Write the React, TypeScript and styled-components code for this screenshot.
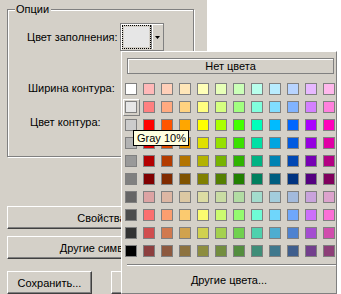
import React from "react";
import styled, { createGlobalStyle } from "styled-components";

const FACE = "#d4d0c8";

const GlobalStyle = createGlobalStyle`
  html, body {
    margin: 0;
    padding: 0;
    background: #fff;
  }
  body {
    font-family: "Liberation Sans", Arial, sans-serif;
    font-size: 11px;
    color: #000;
  }
`;

const Screen = styled.div`
  position: relative;
  width: 341px;
  height: 294px;
  overflow: hidden;
  display: flex;
`;

const Dialog = styled.div`
  width: 207px;
  flex-shrink: 0;
  background: ${FACE};
  padding: 3px 0 0 7px;
  box-sizing: border-box;
  display: flex;
  flex-direction: column;
  align-items: flex-start;
`;

const Outside = styled.div`
  flex: 1;
  background: #fff;
`;

const Group = styled.fieldset`
  margin: 0;
  min-width: 0;
  width: 187px;
  height: 155px;
  box-sizing: border-box;
  padding: 0;
  border: 1px solid #808080;
  box-shadow: inset 1px 1px 0 #fff, 1px 1px 0 #fff;
  display: flex;
  flex-direction: column;
`;

const Legend = styled.legend`
  margin-left: 7px;
  padding: 0 2px 0 1px;
  background: ${FACE};
  line-height: 13px;
`;

const FieldRow = styled.div<{ $top: number; $indent: number }>`
  display: flex;
  align-items: center;
  gap: 2px;
  height: 28px;
  margin-top: ${(p) => p.$top}px;
  padding-left: ${(p) => p.$indent}px;
`;

const Label = styled.span`
  white-space: nowrap;
`;

const ColorPicker = styled.div`
  display: flex;
  width: 44px;
  height: 28px;
  box-sizing: border-box;
  border: 1px solid #808080;
  box-shadow: inset 1px 1px 0 #fff;
  background: ${FACE};
`;

const FocusBox = styled.div`
  width: 29px;
  margin: 1px 0 1px 1px;
  box-sizing: border-box;
  border: 1px dotted #000;
  padding: 1px;
  display: flex;
`;

const Fill = styled.div<{ $color: string }>`
  flex: 1;
  background: ${(p) => p.$color};
`;

const Divider = styled.div`
  width: 1px;
  margin: 1px 0 1px 0;
  background: #808080;
  border-right: 1px solid #fff;
`;

const ArrowPart = styled.div`
  flex: 1;
  display: flex;
  align-items: center;
  justify-content: center;
`;

const PushButton = styled.button<{ $w: number }>`
  width: ${(p) => p.$w}px;
  height: 23px;
  flex-shrink: 0;
  padding: 0;
  box-sizing: border-box;
  background: ${FACE};
  font: inherit;
  color: #000;
  white-space: nowrap;
  overflow: hidden;
  border: 1px solid;
  border-color: #fff #404040 #404040 #fff;
  box-shadow: inset -1px -1px 0 #808080;
`;

const WideButton = styled(PushButton)<{ $top: number }>`
  margin-top: ${(p) => p.$top}px;
`;

const ButtonRow = styled.div`
  display: flex;
  gap: 19px;
  margin-top: 12px;
`;

/* ---- colour drop-down ---- */

const Popup = styled.div`
  position: absolute;
  left: 121px;
  top: 51px;
  width: 216px;
  height: 243px;
  box-sizing: border-box;
  background: ${FACE};
  border: 1px solid;
  border-color: #fff #808080 #808080 #fff;
  padding: 6px 0 0 3px;
  display: flex;
  flex-direction: column;
`;

const NoColorButton = styled.div`
  width: 207px;
  height: 16px;
  margin-left: 2px;
  box-sizing: border-box;
  border: 1px solid #808080;
  box-shadow: inset 1px 1px 0 #fff;
  display: flex;
  align-items: center;
  justify-content: center;
`;

const Palette = styled.div`
  display: grid;
  grid-template-columns: repeat(12, 12px);
  grid-auto-rows: 12px;
  gap: 6px;
  margin-top: 9px;
`;

const Swatch = styled.div<{ $color: string; $selected?: boolean }>`
  position: relative;
  box-sizing: border-box;
  border: 1px solid #808080;
  background: ${(p) => p.$color};

  ${(p) =>
    p.$selected &&
    `
    &::before {
      content: "";
      position: absolute;
      left: -3px;
      top: -3px;
      width: 17px;
      height: 17px;
      box-sizing: border-box;
      border: 1px solid;
      border-color: #fff #808080 #808080 #fff;
    }
  `}
`;

const Separator = styled.div`
  margin: 7px 0 0 2px;
  border-top: 1px solid #808080;
  border-bottom: 1px solid #fff;
`;

const MoreColors = styled.div`
  flex: 1;
  display: flex;
  align-items: center;
  justify-content: center;
  padding-right: 3px;
`;

const Tooltip = styled.div`
  position: absolute;
  left: 133px;
  top: 130px;
  width: 56px;
  height: 16px;
  box-sizing: border-box;
  padding-left: 3px;
  background: #ffffe1;
  border: 1px solid #000;
  display: flex;
  align-items: center;
  white-space: nowrap;
`;

const grays = [
  "#ffffff",
  "#e6e6e6",
  "#cccccc",
  "#b3b3b3",
  "#999999",
  "#808080",
  "#666666",
  "#4d4d4d",
  "#333333",
  "#000000",
];

const hues = [0, 20, 39, 60, 80, 104, 164, 196, 216, 280, 316];

const tones: [number, number][] = [
  [100, 86],
  [100, 75],
  [100, 50],
  [100, 44],
  [100, 35],
  [100, 25],
  [45, 75],
  [95, 71],
  [58, 56],
  [38, 40],
];

export default function App() {
  return (
    <>
      <GlobalStyle />
      <Screen>
        <Dialog>
          <Group>
            <Legend>Опции</Legend>
            <FieldRow $top={7} $indent={19}>
              <Label>Цвет заполнения:</Label>
              <ColorPicker>
                <FocusBox>
                  <Fill $color="#e6e6e6" />
                </FocusBox>
                <Divider />
                <ArrowPart>
                  <svg width="5" height="3" viewBox="0 0 5 3">
                    <polygon points="0,0 5,0 2.5,3" fill="#000" />
                  </svg>
                </ArrowPart>
              </ColorPicker>
            </FieldRow>
            <FieldRow $top={23} $indent={20}>
              <Label>Ширина контура:</Label>
            </FieldRow>
            <FieldRow $top={6} $indent={22}>
              <Label>Цвет контура:</Label>
            </FieldRow>
          </Group>
          <WideButton $w={198} $top={49}>
            Свойства...
          </WideButton>
          <WideButton $w={198} $top={7}>
            Другие символы...
          </WideButton>
          <ButtonRow>
            <PushButton $w={85}>Сохранить...</PushButton>
            <PushButton $w={85}>Удалить</PushButton>
          </ButtonRow>
        </Dialog>
        <Outside />

        <Popup>
          <NoColorButton>Нет цвета</NoColorButton>
          <Palette>
            {tones.map(([s, l], r) => (
              <React.Fragment key={r}>
                <Swatch $color={grays[r]} $selected={r === 1} />
                {hues.map((h) => (
                  <Swatch key={h} $color={`hsl(${h}, ${s}%, ${l}%)`} />
                ))}
              </React.Fragment>
            ))}
          </Palette>
          <Separator />
          <MoreColors>Другие цвета...</MoreColors>
        </Popup>

        <Tooltip>Gray 10%</Tooltip>
      </Screen>
    </>
  );
}
